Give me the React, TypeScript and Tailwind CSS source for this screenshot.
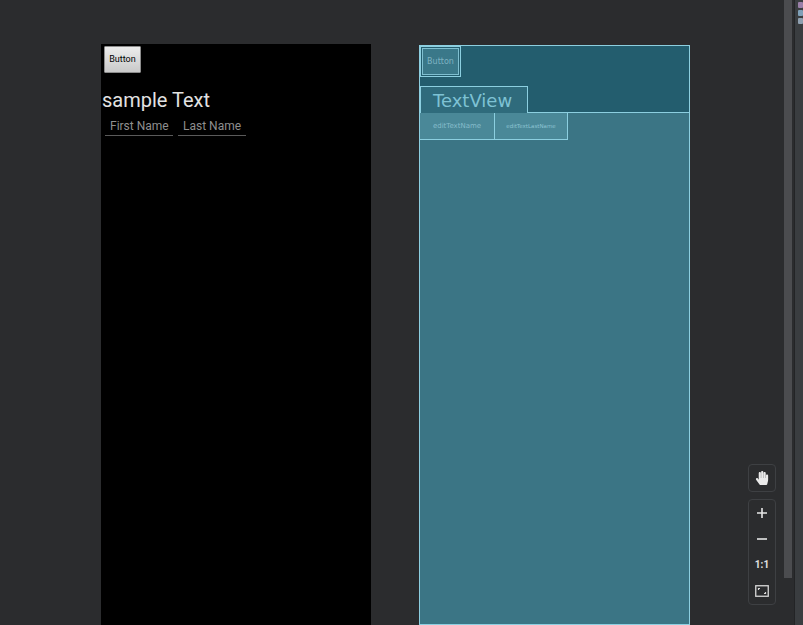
import { FaHandPaper } from 'react-icons/fa'

const roboto = { fontFamily: 'Roboto, "Liberation Sans", sans-serif' }

function DevicePreview() {
  return (
    <div className="h-[581px] w-[270px] shrink-0 bg-black" style={roboto}>
      <div className="pl-[3px] pt-[2px]">
        <button className="flex h-[27px] w-[37px] items-center justify-center rounded-[1px] border border-[#8c8c8c] bg-gradient-to-b from-[#ececec] to-[#c9c9c9] text-[9px] text-black">
          Button
        </button>
      </div>
      <div className="mt-[16px] pl-[1px] text-[20px] leading-[22px] text-[#e2e2e2]">sample Text</div>
      <div className="mt-[8px] flex gap-[5px] pl-[4px]">
        <div className="w-[68px] border-b border-[#5a5a5a] pb-[2px] pl-[5px] text-[12px] leading-[14px] text-[#8f8f8f]">First Name</div>
        <div className="w-[68px] border-b border-[#5a5a5a] pb-[2px] pl-[5px] text-[12px] leading-[14px] text-[#8f8f8f]">Last Name</div>
      </div>
    </div>
  )
}

function Blueprint() {
  return (
    <div className="flex h-[580px] w-[271px] shrink-0 flex-col border border-[#8ccfe0] bg-[#3b7585]" style={{ fontFamily: '"DejaVu Sans", sans-serif' }}>
      <div className="h-[67px] border-b border-[#8ccfe0] bg-[#235d6e]">
        <div className="h-[31px] w-[41px] border border-[#8ccfe0] p-[1px]">
          <div className="flex h-full w-full items-center justify-center border border-[#7fbfd0] bg-[#3a7889] text-[8px] text-[#7fb3c2]">
            Button
          </div>
        </div>
        <div className="mt-[9px] flex h-[27px] w-[108px] items-center border border-b-0 border-[#8ccfe0] bg-[#2f6b7c] pl-[12px] text-[18px] text-[#7ec2d4]">
          TextView
        </div>
      </div>
      <div className="flex h-[27px]">
        <div className="flex w-[75px] items-center justify-center border-b border-r border-[#8ccfe0] bg-[#4a8898] text-[7px] text-[#86bccb]">
          editTextName
        </div>
        <div className="flex w-[73px] items-center justify-center border-b border-r border-[#8ccfe0] bg-[#4a8898] text-[5.5px] text-[#8cc3d2]">
          editTextLastName
        </div>
      </div>
    </div>
  )
}

function ZoomToolbar() {
  return (
    <div className="absolute left-[748px] top-[464px] flex flex-col gap-[7px] text-white">
      <div className="flex h-[28px] w-[28px] items-center justify-center rounded-[4px] border border-[#3e4043] bg-[#2b2c2e]">
        <FaHandPaper className="h-[14px] w-[14px] text-[#eaeaea]" />
      </div>
      <div className="flex w-[28px] flex-col items-center gap-[14px] rounded-[4px] border border-[#3e4043] bg-[#2b2c2e] py-[7px]">
        <svg width="12" height="12" viewBox="0 0 12 12"><path d="M6 1v10M1 6h10" stroke="#e6e6e6" strokeWidth="1.6" /></svg>
        <svg width="12" height="12" viewBox="0 0 12 12"><path d="M1 6h10" stroke="#e6e6e6" strokeWidth="1.6" /></svg>
        <div className="text-[10px] font-bold leading-[12px] text-[#e0e0e0]" style={roboto}>1:1</div>
        <svg width="14" height="12" viewBox="0 0 14 12">
          <rect x="0.75" y="0.75" width="12.5" height="10.5" fill="none" stroke="#d8d8d8" strokeWidth="1.3" />
          <path d="M3.5 5V3.5H5M10.5 7V8.5H9" fill="none" stroke="#d8d8d8" strokeWidth="1.2" />
        </svg>
      </div>
    </div>
  )
}

export default function App() {
  return (
    <div className="flex h-[625px] w-[803px] overflow-hidden bg-[#2b2c2e]">
      <div className="relative w-[784px] shrink-0">
        <div className="flex gap-[48px] pl-[101px] pt-[44px]">
          <DevicePreview />
          <div className="pt-[1px]">
            <Blueprint />
          </div>
        </div>
        <ZoomToolbar />
      </div>
      <div className="h-[578px] w-[8px] shrink-0 bg-[#4b4c4f]" />
      <div className="w-[2px] shrink-0" />
      <div className="flex w-[9px] shrink-0 flex-col gap-[2px] border-l border-[#232426] bg-[#3a3d40] pl-[3px] pt-[2px]">
        <div className="h-[6px] w-[5px] rounded-[1px] bg-[#9a7fa8]" />
        <div className="h-[6px] w-[5px] rounded-[1px] bg-[#7fa0b8]" />
        <div className="h-[6px] w-[5px] rounded-[1px] bg-[#8fa0b0]" />
      </div>
    </div>
  )
}
